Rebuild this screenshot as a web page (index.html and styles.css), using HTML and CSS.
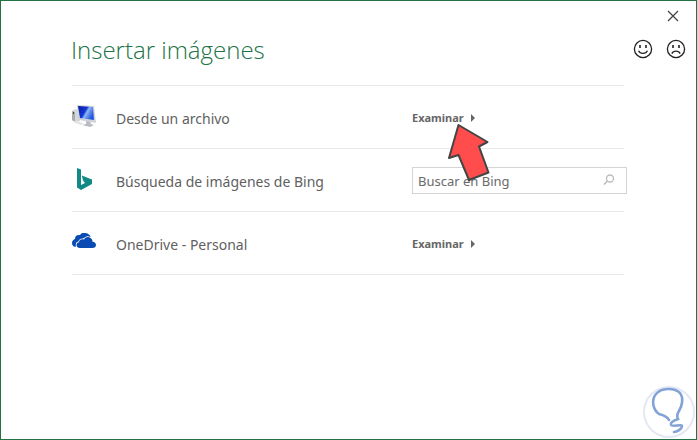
FILE: index.html
```html
<!DOCTYPE html>
<html lang="es">
  <head>
    <meta charset="UTF-8" />
    <meta name="viewport" content="width=device-width, initial-scale=1.0" />
    <title>Insertar imágenes</title>
    <link rel="stylesheet" href="styles.css">
  </head>
  <body>
    <main class="dialog">
      <div class="title-bar">
        <button type="button" class="icon-btn" aria-label="Cerrar">
          <svg width="12" height="12" viewBox="0 0 12 12"><path d="M1 1L11 11M11 1L1 11" stroke="#444" stroke-width="1.3"/></svg>
        </button>
      </div>

      <header class="header">
        <h1>Insertar imágenes</h1>
        <div class="feedback">
          <button type="button" class="icon-btn" aria-label="Me gusta">
            <svg width="20" height="20" viewBox="0 0 20 20" fill="none" stroke="#222" stroke-width="1.3">
              <circle cx="10" cy="10" r="8.6"/>
              <path d="M5.600 11.800C7 15.300 13 15.300 14.400 11.800"/>
              <path d="M7 6v3M13 6v3" stroke-width="1.6"/>
            </svg>
          </button>
          <button type="button" class="icon-btn" aria-label="No me gusta">
            <svg width="20" height="20" viewBox="0 0 20 20" fill="none" stroke="#222" stroke-width="1.3">
              <circle cx="10" cy="10" r="8.6"/>
              <path d="M5.800 14.600C7.400 11.300 12.600 11.300 14.200 14.600"/>
              <path d="M7 6v3M13 6v3" stroke-width="1.6"/>
            </svg>
          </button>
        </div>
      </header>

      <ul class="sources">
        <li class="source">
          <svg width="24" height="24" viewBox="0 0 24 24">
            <defs>
              <linearGradient id="screen" x1="0" y1="0" x2="1" y2="0.5">
                <stop offset="0" stop-color="#0a1a9c"/>
                <stop offset="0.5" stop-color="#1238d8"/>
                <stop offset="0.62" stop-color="#8fb4f4"/>
                <stop offset="1" stop-color="#2458dc"/>
              </linearGradient>
            </defs>
            <path d="M0 6L3 4L8 5V16L4 17L0 15Z" fill="#d5d8da"/>
            <path d="M0 6L3 7V17L0 15Z" fill="#a9adb0"/>
            <path d="M1.500 7v2" stroke="#444"/>
            <path d="M14 15L18 16L19 19L22 20L18 22L10 20L14 19Z" fill="#b9bdc1"/>
            <path d="M3 16L11 18L9 20L1 17Z" fill="#e0e2e4"/>
            <path d="M5 0L22 1L24 18L7 15Z" fill="#cfd3d8"/>
            <path d="M6 1L21 2L22 15L8 13Z" fill="url(#screen)"/>
          </svg>
          <span class="source-name">Desde un archivo</span>
          <div class="source-action">
            <button type="button" class="browse-btn">Examinar</button>
            <svg class="pointer" width="44" height="60" viewBox="0 0 44 60">
              <path d="M11.500 3L40.500 20L32 24.500L41.500 50.500L22 58L11.500 33L2 36Z" fill="#ff4d4d" stroke="#444" stroke-width="2" stroke-linejoin="round"/>
            </svg>
          </div>
        </li>

        <li class="source">
          <svg width="24" height="24" viewBox="0 0 24 24">
            <path d="M5 0L9 1.500V17L13 15L11 12.500L9.800 7.500L20 11.500V16L9 22L5 19.500Z" fill="#118a86"/>
          </svg>
          <label class="source-name" for="bing-search">Búsqueda de imágenes de Bing</label>
          <form class="search">
            <input type="text" id="bing-search" placeholder="Buscar en Bing">
            <button type="submit" class="icon-btn" aria-label="Buscar">
              <svg width="12" height="12" viewBox="0 0 12 12" fill="none" stroke="#bbb" stroke-width="1.3">
                <circle cx="7" cy="4.500" r="3.500"/>
                <path d="M4.500 7L1 10.500" stroke-width="1.6"/>
              </svg>
            </button>
          </form>
        </li>

        <li class="source">
          <svg width="24" height="24" viewBox="0 0 24 24">
            <path d="M3.500 16C1 15.500 0 14 0 12C0 10 1.500 8.500 3 8C3 5 5 3.500 8 4C9.500 1.500 11.500 2 13.500 2C16.500 2.500 18 4 18.500 6L12 7L5 11.700Z" fill="#0a4bb3"/>
            <path d="M8 17C5.500 17 4.500 15.500 4.500 14C4.500 12.500 5.500 11.300 7 11.300C7 8.800 9.500 7.500 12 8.500C13 6.500 15 5.700 17 6.200C19.500 6.700 20.500 8.700 20.500 10.700C22.500 10.700 24 12 24 14C24 16 22.500 17 20.500 17Z" fill="#0a4bb3" stroke="#fff" stroke-width="1.5" paint-order="stroke"/>
          </svg>
          <span class="source-name">OneDrive - Personal</span>
          <div class="source-action">
            <button type="button" class="browse-btn">Examinar</button>
          </div>
        </li>
      </ul>

      <svg class="bulb" width="52" height="52" viewBox="0 0 52 52" fill="none" stroke-linecap="round">
        <circle cx="26" cy="26" r="25" stroke="#e3e8f3" stroke-width="2"/>
        <path d="M26 34C24 30 20 29 16 28C10 24 8 14 13 8C18 2 31 1 37 7C41 12 39 20 36 25C34 28 34 31 35 33C32 34 27 36 28 39C29 41 39 38 39 40C39 43 34 46 31 46" stroke="#83a3d6" stroke-width="2.600"/>
      </svg>
    </main>
  </body>
</html>
```

FILE: styles.css
```css
* {
  box-sizing: border-box;
}

body {
  margin: 0;
  font-family: "Noto Sans", "Open Sans", sans-serif;
  color: #5f5f5f;
  background-color: #fff;
}

button {
  padding: 0;
  border: none;
  background: none;
  font-family: inherit;
  cursor: pointer;
}

svg {
  display: block;
}

.dialog {
  position: relative;
  min-height: 100vh;
  border: 1px solid #217346;
}

.title-bar {
  display: flex;
  justify-content: flex-end;
  padding: 9px 17px 0 0;
}

/* Cabecera */
.header {
  display: flex;
  justify-content: space-between;
  align-items: center;
  height: 54px;
  padding: 0 10px 0 70px;
}

.header h1 {
  margin: 0;
  font-family: "Open Sans", sans-serif;
  font-size: 24px;
  font-weight: 300;
  color: #217346;
}

.feedback {
  display: flex;
  gap: 13px;
}

/* Lista de orígenes */
.sources {
  margin: 9px 72px 0 71px;
  padding: 0;
  list-style: none;
  border-top: 1px solid #e8e8e8;
}

.source {
  display: grid;
  grid-template-columns: 44px 296px minmax(0, 1fr);
  align-items: center;
  height: 63px;
  border-bottom: 1px solid #e8e8e8;
}

.source-name {
  padding-top: 2px;
  font-size: 14px;
}

.source-action {
  position: relative;
  display: flex;
  padding-top: 2px;
}

.browse-btn {
  display: flex;
  align-items: center;
  gap: 7px;
  font-size: 11px;
  font-weight: 700;
  line-height: 16px;
  color: #666;
}

.browse-btn::after {
  content: "";
  border: 4px solid transparent;
  border-left-color: #666;
  border-right-width: 0;
}

/* Flecha sobre el primer botón */
.pointer {
  position: absolute;
  top: 14px;
  left: 35px;
  pointer-events: none;
}

.search {
  display: flex;
  align-items: center;
  height: 27px;
  margin-right: -3px;
  padding-right: 11px;
  border: 1px solid #d4d4d4;
}

.search input {
  flex: 1;
  min-width: 0;
  padding: 1px 5px 0;
  border: none;
  outline: none;
  background: none;
  font-family: inherit;
  font-size: 13px;
  color: #666;
}

.search input::placeholder {
  color: #6a6a6a;
}

.bulb {
  position: absolute;
  right: 1px;
  bottom: 1px;
}
```
